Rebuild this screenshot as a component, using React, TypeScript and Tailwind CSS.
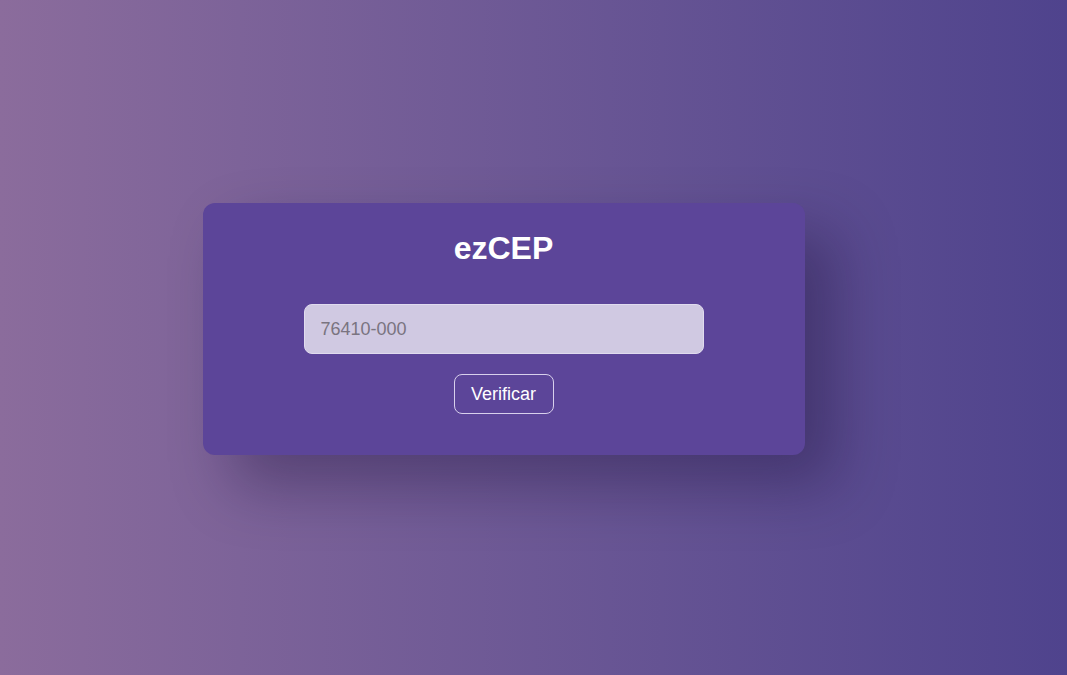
import React from "react";

export default function App() {
  return (
    <div
      className="w-full min-h-[675px] h-[675px] flex items-center justify-center bg-gradient-to-r from-[#8b6c9c] to-[#4f438d]"
      style={{ fontFamily: '"Liberation Sans", Arial, sans-serif' }}
    >
      <div className="w-[602px] h-[252px] -mt-[17px] mr-[60px] bg-[#5c4599] rounded-[12px] shadow-[30px_30px_60px_rgba(20,10,50,0.35)] flex flex-col items-center pt-[27px]">
        <h1 className="text-[32px] leading-[37px] font-bold text-white">ezCEP</h1>
        <input
          type="text"
          placeholder="76410-000"
          className="mt-[37px] w-[400px] h-[50px] rounded-[8px] bg-[#d0c9e2] border border-[#e0dbee] pl-[16px] pr-[15px] text-[18px] text-[#333] placeholder:text-[#7a7480] outline-none"
        />
        <button className="mt-[20px] w-[100px] h-[40px] rounded-[8px] border border-[#d8d0ec] text-white text-[18px] bg-transparent">
          Verificar
        </button>
      </div>
    </div>
  );
}
